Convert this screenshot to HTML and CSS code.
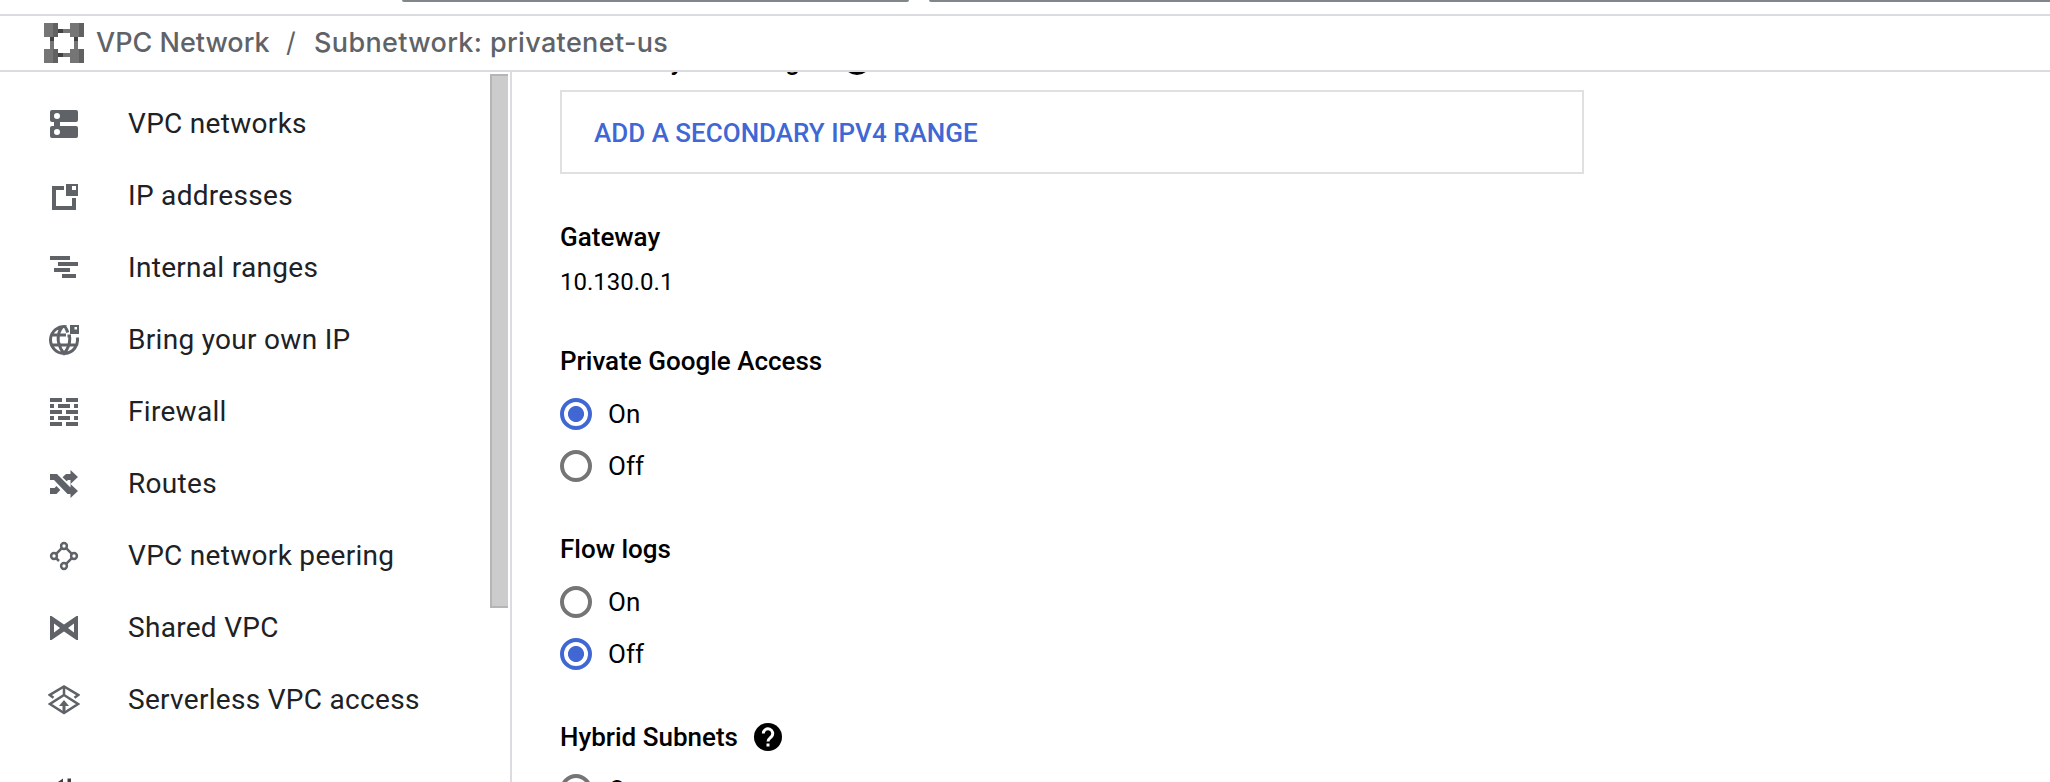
FILE: index.html
```
<!DOCTYPE html>
<html lang="en">
<head>
<meta charset="utf-8">
<title>Subnetwork: privatenet-us</title>
<link rel="stylesheet" href="styles.css">
</head>
<body>
<div class="topbar"><div class="picker"></div><div class="search"></div></div>
<header class="header">
  <svg class="product-icon" viewBox="0 0 40 40" shape-rendering="crispEdges">
    <path fill="#424242" d="M14 6h12v4H14zM14 30h12v4H14zM6 14h4v12H6zM30 14h4v12h-4z"/>
    <path fill="#757575" d="M19 6h7v4h-7zM19 30h7v4h-7zM6 18h4v8H6zM30 18h4v8h-4z"/>
    <path fill="#757575" d="M0 0h14v14H0zM26 0h14v14H26zM0 26h14v14H0zM26 26h14v14H26z"/>
    <path fill="#616161" d="M9 0h5v14H9zM35 0h5v14h-5zM9 26h5v14H9zM35 26h5v14h-5z"/>
  </svg>
  <nav class="crumbs"><span class="crumb">VPC Network</span><span class="slash">/</span><span class="crumb current">Subnetwork: privatenet-us</span></nav>
</header>
<div class="body">
  <aside class="sidebar">
    <ul class="nav">
      <li><svg viewBox="0 0 32 32"><path fill-rule="evenodd" d="M4 2h24a2 2 0 0 1 2 2v8a2 2 0 0 1-2 2H12v4h16a2 2 0 0 1 2 2v8a2 2 0 0 1-2 2H4a2 2 0 0 1-2-2v-8a2 2 0 0 1 2-2h2v-4H4a2 2 0 0 1-2-2V4a2 2 0 0 1 2-2zM9 5a3 3 0 1 0 0 6a3 3 0 1 0 0-6zM9 21a3 3 0 1 0 0 6a3 3 0 1 0 0-6z"/></svg>VPC networks</li>
      <li><svg viewBox="0 0 32 32"><path fill-rule="evenodd" d="M4 6h12v4H8v16h16v-8h4v12H4zM18 4h12v12H18zM24 6v4h4V6z"/></svg>IP addresses</li>
      <li><svg viewBox="0 0 32 32"><path d="M2 4h20v4H2zM10 10h20v4H10zM6 16h16v4H6zM14 22h14v4H14z"/></svg>Internal ranges</li>
      <li><svg viewBox="0 0 32 32"><g class="line" stroke-width="3"><path d="M18.500 2.700A13.500 13.500 0 1 0 29.300 13.500M3.500 11H18M3.500 21H28.500M14.500 2.800Q9 9 10.500 18Q12 25 16 29.500Q22 23 21.800 13.500M17 2.800Q19 5.500 19.800 8.500M19.500 12H23"/></g><path fill-rule="evenodd" d="M22 1h9v9h-9zM26.500 3v2.500h2.500v-2.500z"/></svg>Bring your own IP</li>
      <li><svg viewBox="0 0 32 32"><path d="M2 2h12v4H2zM18 2h12v4H18zM2 8h4v4H2zM10 8h12v4H10zM26 8h4v4h-4zM2 14h12v4H2zM18 14h12v4H18zM2 20h4v4H2zM10 20h12v4H10zM26 20h4v4h-4zM2 26h12v4H2zM18 26h12v4H18z"/></svg>Firewall</li>
      <li><svg viewBox="0 0 32 32"><path d="M2 6h7l13.500 13.500V16L30 23l-7.500 7v-4H19.500L6 12H2zM22.500 2L30 9l-7.500 7v-4h-2.500l-1.300 1.300-4.200-4L18 6h4.500zM2 20h4.500l2-2 3.800 4L8.500 26H2z"/></svg>Routes</li>
      <li><svg viewBox="0 0 32 32"><g class="line" stroke-width="2.500"><circle cx="16" cy="6" r="2.900"/><circle cx="6" cy="16" r="2.900"/><circle cx="26" cy="16" r="2.900"/><circle cx="16" cy="26" r="2.900"/><path d="M13.800 8.200L8.200 13.800M18.200 8.200l5.600 5.600M23.800 18.200l-5.600 5.600M8 18l3 3"/></g></svg>VPC network peering</li>
      <li><svg viewBox="0 0 32 32"><path fill-rule="evenodd" d="M3.500 4L16 12.500 28.500 4H30v24h-1.500L16 19.500 3.500 28H2V4zM6 11.500v9l6-4.500zM26 11.500v9l-6-4.500z"/></svg>Shared VPC</li>
      <li><svg viewBox="0 0 32 32"><g class="line" stroke-width="2.500"><path d="M5.500 13.800L1.800 11 16 2.500 30.200 11l-3.700 2.800M16 2.300V11M16 11L30 20 16 29 2 20z"/><path stroke-width="3" d="M16 29V20"/></g><path d="M16 16l5 6H11z"/></svg>Serverless VPC access</li>
      <li class="next"><svg viewBox="0 0 32 32"><path fill="#3c4043" d="M15 .5v20h-4.500V5L7 6zM19.500.5H23v20h-3.500z"/></svg></li>
    </ul>
    <div class="scrollbar"></div>
  </aside>
  <main class="content">
    <h2 class="label secondary">Secondary IPv4 ranges<span class="help"></span></h2>
    <div class="card"><a class="add">ADD A SECONDARY IPV4 RANGE</a></div>
    <h2 class="label gateway">Gateway</h2>
    <div class="value">10.130.0.1</div>
    <h2 class="label access">Private Google Access</h2>
    <div class="radios">
      <div class="radio on"><i></i>On</div>
      <div class="radio"><i></i>Off</div>
    </div>
    <h2 class="label">Flow logs</h2>
    <div class="radios">
      <div class="radio"><i></i>On</div>
      <div class="radio on"><i></i>Off</div>
    </div>
    <h2 class="label">Hybrid Subnets<span class="help"><svg viewBox="0 0 28 28"><path d="M9.300 10.500a4.700 4.700 0 1 1 8.200 3.100c-1.600 1.700-3.500 2.300-3.500 5" fill="none" stroke="#fff" stroke-width="3"/><path fill="#fff" d="M12.500 20.500h3v3h-3z"/></svg></span></h2>
    <div class="radios">
      <div class="radio"><i></i>On</div>
    </div>
  </main>
</div>
</body>
</html>
```
FILE: styles.css
```
* { box-sizing: border-box; }
body {
  margin: 0;
  height: 782px;
  overflow: hidden;
  display: flex;
  flex-direction: column;
  background: #fff;
  color: #000;
  font-family: Roboto, "Liberation Sans", sans-serif;
}

.topbar {
  flex: none;
  height: 14px;
  padding-left: 402px;
  display: flex;
  gap: 20px;
  align-items: flex-start;
}
.picker, .search {
  height: 2px;
  background: #80868b;
  border-radius: 0 0 3px 3px;
}
.picker { width: 507px; }
.search { flex: 1; border-bottom-right-radius: 0; }

.header {
  flex: none;
  height: 58px;
  padding-left: 44px;
  display: flex;
  align-items: center;
  border-top: 2px solid #dadce0;
  border-bottom: 2px solid #dadce0;
}
.product-icon { width: 40px; height: 40px; }
.crumbs {
  display: flex;
  align-items: baseline;
  font: 500 27px/34px Inter, "Open Sans", sans-serif;
  color: #5f6368;
}
.crumb { width: 190px; margin-left: 12px; white-space: nowrap; }
.slash { width: 28px; font-weight: 400; }
.crumb.current { width: auto; margin-left: 0; letter-spacing: 0.35px; }

.body { flex: 1; min-height: 0; display: flex; overflow: hidden; }

.sidebar {
  flex: none;
  width: 512px;
  overflow: hidden;
  display: flex;
  justify-content: space-between;
  border-right: 2px solid #dadce0;
}
.nav { margin: 0; padding: 16px 0 0 48px; list-style: none; }
.nav li {
  display: flex;
  align-items: center;
  gap: 48px;
  height: 72px;
  font-size: 28px;
  line-height: 32px;
  letter-spacing: 0.3px;
  color: #202124;
  white-space: nowrap;
}
.nav svg { flex: none; width: 32px; height: 32px; fill: #5f6368; }
.nav .line { fill: none; stroke: #5f6368; }
.nav .next { margin-top: 22px; }
.scrollbar {
  flex: none;
  width: 18px;
  height: 534px;
  margin: 2px 2px 0 0;
  background: #ccc;
  border: 2px solid #b5b5b5;
  border-right: 0;
}

.content { width: 1072px; padding-left: 48px; overflow: hidden; }
.label {
  margin: 0;
  height: 32px;
  display: flex;
  align-items: center;
  font-size: 26px;
  line-height: 32px;
  font-weight: 500;
  white-space: nowrap;
}
.help {
  width: 28px;
  height: 28px;
  margin-left: 16px;
  border-radius: 50%;
  background: #000;
}
.help svg { display: block; }
.secondary { margin-top: -27px; }
.card {
  width: 1024px;
  height: 84px;
  margin-top: 13px;
  padding: 2px 0 0 32px;
  display: flex;
  align-items: center;
  border: 2px solid #e0e0e0;
}
.add { font-size: 26px; line-height: 32px; font-weight: 500; color: #4067d4; }
.gateway { margin-top: 47px; }
.value { margin-top: 14px; font-size: 24px; line-height: 30px; }
.access { margin-top: 48px; }
.radios { display: flex; flex-direction: column; gap: 20px; margin: 21px 0 51px; }
.radio {
  display: flex;
  align-items: center;
  gap: 16px;
  height: 32px;
  font-size: 26px;
  line-height: 32px;
}
.radio i {
  display: block;
  width: 32px;
  height: 32px;
  border: 4px solid #757575;
  border-radius: 50%;
}
.radio.on i {
  border-color: #4067d4;
  background: radial-gradient(circle, #4067d4 7.6px, transparent 8.4px);
}
```
